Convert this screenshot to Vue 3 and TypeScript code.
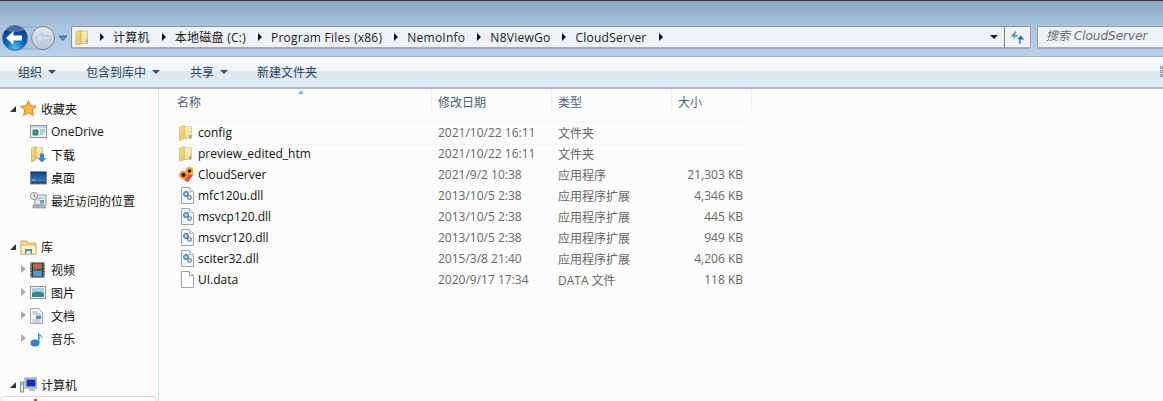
<script setup lang="ts">
type FileRow = { name: string; date: string; type: string; size: string; icon: 'folder' | 'app' | 'dll' | 'file' }
const crumbs = ['计算机', '本地磁盘 (C:)', 'Program Files (x86)', 'NemoInfo', 'N8ViewGo', 'CloudServer']
const tools = [
  { label: '组织', arrow: true },
  { label: '包含到库中', arrow: true },
  { label: '共享', arrow: true },
  { label: '新建文件夹', arrow: false },
]
const files: FileRow[] = [
  { name: 'config', date: '2021/10/22 16:11', type: '文件夹', size: '', icon: 'folder' },
  { name: 'preview_edited_htm', date: '2021/10/22 16:11', type: '文件夹', size: '', icon: 'folder' },
  { name: 'CloudServer', date: '2021/9/2 10:38', type: '应用程序', size: '21,303 KB', icon: 'app' },
  { name: 'mfc120u.dll', date: '2013/10/5 2:38', type: '应用程序扩展', size: '4,346 KB', icon: 'dll' },
  { name: 'msvcp120.dll', date: '2013/10/5 2:38', type: '应用程序扩展', size: '445 KB', icon: 'dll' },
  { name: 'msvcr120.dll', date: '2013/10/5 2:38', type: '应用程序扩展', size: '949 KB', icon: 'dll' },
  { name: 'sciter32.dll', date: '2015/3/8 21:40', type: '应用程序扩展', size: '4,206 KB', icon: 'dll' },
  { name: 'UI.data', date: '2020/9/17 17:34', type: 'DATA 文件', size: '118 KB', icon: 'file' },
]
</script>

<template>
  <div class="win">
    <header class="addr">
      <div class="navbtns">
        <svg width="68" height="30" viewBox="0 0 68 30">
          <defs>
            <radialGradient id="bk" cx="50%" cy="90%" r="75%">
              <stop offset="0" stop-color="#45c0f5" />
              <stop offset="0.5" stop-color="#0f66c0" />
              <stop offset="1" stop-color="#0a3a86" />
            </radialGradient>
            <linearGradient id="fw" x1="0" y1="0" x2="0" y2="1">
              <stop offset="0" stop-color="#e4eaf1" />
              <stop offset="1" stop-color="#b4c6da" />
            </linearGradient>
            <linearGradient id="fl" x1="0" y1="0" x2="1" y2="1">
              <stop offset="0" stop-color="#f7e08c" />
              <stop offset="1" stop-color="#e2bd5c" />
            </linearGradient>
            <linearGradient id="fr" x1="0" y1="0" x2="0" y2="1">
              <stop offset="0" stop-color="#fbf0bd" />
              <stop offset="1" stop-color="#f1d987" />
            </linearGradient>
          </defs>
          <path d="M15 4h28a11 11 0 0 1 0 22H15z" fill="#aec4dc" stroke="#8ca2ba" />
          <circle cx="43" cy="15" r="11.500" fill="url(#fw)" stroke="#7f838a" />
          <path d="M36 15l6-5.500v3.500h8v4h-8v3.500z" fill="#d5dfe9" stroke="#aab7c5" stroke-width=".8" />
          <circle cx="15" cy="15" r="12.500" fill="url(#bk)" stroke="#56708f" />
          <path d="M5.500 7a11 8 0 0 1 19 0c-5 2.500-14 2.500-19 0z" fill="#fff" opacity=".25" />
          <path d="M6 15l7.500-7v4.500h8.500v5h-8.500V22z" fill="#fff" />
          <path d="M59 13h8l-4 4.500z" fill="#4d8fc8" stroke="#234a72" stroke-width=".7" />
        </svg>
      </div>
      <div class="path">
        <svg class="crumb-folder" width="14" height="17" viewBox="0 0 14 17">
          <path d="M1 2.500 6 1v14l-5 1z" fill="url(#fl)" stroke="#c9ad62" stroke-width=".7" />
          <path d="M6 2h6.500v12.500H6z" fill="url(#fr)" stroke="#cdb56e" stroke-width=".7" />
          <path d="M11 10.500h1.500v3H11z" fill="#5aa9dc" />
        </svg>
        <div class="crumbs">
          <template v-for="c in crumbs" :key="c">
            <i class="crumb-arrow"></i>
            <span class="crumb">{{ c }}</span>
          </template>
          <i class="crumb-arrow"></i>
        </div>
        <i class="path-drop"></i>
        <div class="refresh">
          <svg width="15" height="15" viewBox="0 0 15 15">
            <path d="M6.500.5 1 5.500l4 3V6.500h2.800V5H5.500C5.200 3.500 5.800 2 6.500.5z" fill="#4f97d2" />
            <path d="M10.500 14.500V9.500H14L11 5.500 7.300 9h1.900v3.500c0 .8.500 1.500 1.300 2z" fill="#2a64a8" />
          </svg>
        </div>
      </div>
      <div class="search">搜索 CloudServer</div>
    </header>

    <nav class="toolbar">
      <span v-for="t in tools" :key="t.label" class="tool">
        {{ t.label }}<i v-if="t.arrow" class="tool-arrow"></i>
      </span>
      <span class="grip"><b></b><b></b><b></b></span>
    </nav>

    <main class="body">
      <aside class="side">
        <section class="group">
          <div class="nav-row top">
            <i class="open"></i>
            <svg width="17" height="17" viewBox="0 0 17 17"><path d="M8.500.8l2.300 5 5.500.6-4.100 3.700 1.200 5.400-4.900-2.800-4.900 2.800 1.200-5.400L.7 6.400l5.500-.6z" fill="#fbb93c" stroke="#e0782a" /></svg>
            <span>收藏夹</span>
          </div>
          <div class="nav-row sub">
            <svg width="17" height="14" viewBox="0 0 17 14"><rect x=".5" y=".5" width="16" height="12" fill="#eef3f7" stroke="#8e959c" /><rect x="1" y="1" width="15" height="2" fill="#cfd8e0" /><rect x="2.500" y="4.500" width="6" height="6" fill="#3f8a8a" /><path d="M10 5h5M10 7h5M10 9h3" stroke="#8a9aa8" /></svg>
            <span>OneDrive</span>
          </div>
          <div class="nav-row sub">
            <svg width="17" height="17" viewBox="0 0 17 17"><path d="M1.500 2 6 .5v13.500l-4.500 2z" fill="url(#fl)" stroke="#c9ad62" stroke-width=".7" /><path d="M6 1.500h6.500V12H6z" fill="url(#fr)" stroke="#cdb56e" stroke-width=".7" /><path d="M10 7.500h4V12h2.500L12 16.500 7.500 12H10z" fill="#2f8ad8" /></svg>
            <span>下载</span>
          </div>
          <div class="nav-row sub">
            <svg width="17" height="14" viewBox="0 0 17 14"><defs><linearGradient id="dt" x1="0" y1="0" x2="0" y2="1"><stop offset="0" stop-color="#123a82" /><stop offset="1" stop-color="#3f8fd8" /></linearGradient></defs><rect x=".5" y=".5" width="16" height="12.500" fill="url(#dt)" stroke="#7e8a98" /><rect x="1" y="10.500" width="15" height="2" fill="#3a3f48" /><path d="M2 10c.8-1.500 2.500-1.500 3.500 0" stroke="#9fd0f0" fill="none" /></svg>
            <span>桌面</span>
          </div>
          <div class="nav-row sub">
            <svg width="17" height="17" viewBox="0 0 17 17"><rect x="5" y="3" width="11" height="10" fill="#e8edf0" stroke="#8a9298" /><path d="M7 6h7M7 8h3" stroke="#9aa5ad" /><rect x="10" y="8" width="4" height="3.500" fill="#5aa0c8" /><path d="M3 13h11l2 3H3z" fill="#aeb6bc" stroke="#7d868c" stroke-width=".6" /><circle cx="4" cy="4" r="3.500" fill="#fff" stroke="#7d8890" /><path d="M4 2v2l1.500 1" stroke="#555" fill="none" /></svg>
            <span>最近访问的位置</span>
          </div>
        </section>
        <section class="group">
          <div class="nav-row top">
            <i class="open"></i>
            <svg width="17" height="16" viewBox="0 0 17 16"><path d="M1 2h6l1 2h8v11H1z" fill="#f2dc9a" stroke="#c9ad62" /><path d="M1 6h15v9H1z" fill="#fbf0c4" stroke="#d0b873" /><path d="M5 15v-5h7v5z" fill="#4d8fc4" /><rect x="6.500" y="12" width="4" height="3" fill="#fbf0c4" /></svg>
            <span>库</span>
          </div>
          <div class="nav-row sub exp">
            <i class="closed"></i>
            <svg width="15" height="16" viewBox="0 0 15 16"><rect x=".5" y=".5" width="14" height="15" fill="#23343c" /><rect x="3" y="1.500" width="9" height="6" fill="#b06a50" /><rect x="3" y="8.500" width="9" height="6" fill="#4b9ad0" /><path d="M1 2h1M1 5h1M1 8h1M1 11h1M1 14h1M13 2h1M13 5h1M13 8h1M13 11h1M13 14h1" stroke="#d8e4e8" /></svg>
            <span>视频</span>
          </div>
          <div class="nav-row sub exp">
            <i class="closed"></i>
            <svg width="16" height="13" viewBox="0 0 16 13"><rect x=".5" y=".5" width="15" height="12" fill="#f4f6f7" stroke="#8a9298" /><rect x="2" y="2" width="12" height="9" fill="#a8d0e0" /><path d="M2 7c4-2 8-1 12 0v4H2z" fill="#2e8a88" /></svg>
            <span>图片</span>
          </div>
          <div class="nav-row sub exp">
            <i class="closed"></i>
            <svg width="13" height="16" viewBox="0 0 13 16"><path d="M.5.500h8l4 4v11H.5z" fill="#f6f8f9" stroke="#9aa2a8" /><path d="M2.500 4h5M2.500 6h8M2.500 12h8M2.500 14h8" stroke="#9fb0bd" /><rect x="6" y="7.500" width="5" height="3.500" fill="#4c90c0" /></svg>
            <span>文档</span>
          </div>
          <div class="nav-row sub exp">
            <i class="closed"></i>
            <svg width="14" height="17" viewBox="0 0 14 17"><ellipse cx="5" cy="13" rx="4.500" ry="3.500" fill="#2a80cc" /><path d="M8 13V1c0 3 5 3.500 4.500 8-.7-2.500-2.500-3-2.800-3L9.500 13z" fill="#3f9ce0" /></svg>
            <span>音乐</span>
          </div>
        </section>
        <section class="group">
          <div class="nav-row top">
            <i class="open"></i>
            <svg width="17" height="16" viewBox="0 0 17 16"><rect x="5" y="1" width="12" height="10" fill="#d8dde2" stroke="#8a9298" /><rect x="6.500" y="2.500" width="9" height="7" fill="#1230b8" /><path d="M9 12h6v2H9z" fill="#b8c0c6" /><rect x=".5" y="5" width="3" height="10" fill="#dfe3e6" stroke="#8a9298" /><path d="M1 7h2" stroke="#3caa4c" /></svg>
            <span>计算机</span>
          </div>
          <div class="disk-row"><i></i></div>
        </section>
      </aside>

      <section class="list">
        <i class="sort"></i>
        <div class="head cols">
          <span class="c-name">名称</span>
          <span class="c-date">修改日期</span>
          <span class="c-type">类型</span>
          <span class="c-size">大小</span>
        </div>
        <div class="rows">
          <div v-for="f in files" :key="f.name" class="row">
            <span class="name">
              <svg v-if="f.icon === 'folder'" width="13" height="16" viewBox="0 0 13 16"><path d="M.500 2 5.500.500v13L.500 15.500z" fill="url(#fl)" stroke="#d3b964" stroke-width=".7" /><path d="M5.500 1.500h7v12h-7z" fill="url(#fr)" stroke="#d6c07a" stroke-width=".7" /><path d="M10.500 10h1.500v3h-1.500z" fill="#5aa9dc" /></svg>
              <svg v-else-if="f.icon === 'app'" width="15" height="17" viewBox="0 0 15 17"><path d="M2 11 8.500 16.500 14 9 12 5 5 7z" fill="#e8483a" /><circle cx="4.500" cy="9" r="4.300" fill="#f0932e" /><circle cx="4.500" cy="9" r="2" fill="#2a0e06" /><circle cx="10.500" cy="5" r="3.900" fill="#f4a834" /><circle cx="10.500" cy="5" r="1.800" fill="#2a0e06" /></svg>
              <svg v-else-if="f.icon === 'dll'" class="page" width="13" height="17" viewBox="0 0 13 17"><path d="M.5.500h8l4 4v12H.5z" fill="#f4f7f9" stroke="#9ba4ab" /><path d="M8.500.500v4h4" fill="#e6ebef" stroke="#b5bcc2" /><circle cx="5" cy="7" r="2.300" fill="#bcd6ee" stroke="#3f78c0" stroke-width="1.300" /><circle cx="8.500" cy="10.500" r="1.800" fill="#eef2f5" stroke="#74899a" stroke-width="1.300" /></svg>
              <svg v-else class="page" width="13" height="17" viewBox="0 0 13 17"><path d="M.5.500h8l4 4v12H.5z" fill="#fff" stroke="#a0a5a9" /><path d="M8.500.500v4h4" fill="#eef0f2" stroke="#a0a5a9" /></svg>
              <span class="name-text">{{ f.name }}</span>
            </span>
            <span class="meta">{{ f.date }}</span>
            <span class="meta">{{ f.type }}</span>
            <span class="meta right">{{ f.size }}</span>
          </div>
        </div>
      </section>
    </main>
  </div>
</template>

<style>
html, body { margin: 0; padding: 0; background: #fcfcfc; overflow: hidden; }
</style>

<style scoped>
.win {
  width: 1163px;
  height: 401px;
  overflow: hidden;
  display: flex;
  flex-direction: column;
  font-family: "Open Sans", "Noto Sans CJK SC", sans-serif;
  font-size: 12px;
  color: #111;
  background: #fcfcfc;
}
.addr {
  box-sizing: border-box;
  height: 57px;
  flex: none;
  border-top: 1px solid #3b3b3b;
  border-bottom: 1px solid #9fb4cc;
  background: linear-gradient(#8aa5c0, #a9c3df 45%, #b9d1ea);
  display: flex;
  align-items: flex-start;
  padding-top: 22px;
}
.navbtns { width: 71px; height: 30px; flex: none; display: flex; }
.path {
  box-sizing: border-box;
  width: 960px;
  height: 23px;
  margin-top: 3px;
  flex: none;
  display: flex;
  align-items: center;
  background: #eef1f6;
  border: 1px solid #8d9094;
  border-right-color: #a3a6aa;
  border-bottom: 2px solid #a5a9ad;
  border-radius: 2px;
}
.crumb-folder { margin-left: 3px; flex: none; }
.crumbs { display: flex; align-items: center; margin-left: 11px; flex: 1; letter-spacing: .25px; }
.crumb { margin: 0 12px 0 9px; color: #1a1a1a; white-space: nowrap; }
.crumb-arrow { width: 0; height: 0; border-left: 4px solid #111; border-top: 4px solid transparent; border-bottom: 4px solid transparent; flex: none; }
.path-drop { width: 0; height: 0; border-top: 4px solid #101060; border-left: 4px solid transparent; border-right: 4px solid transparent; margin-right: 6px; flex: none; }
.refresh {
  width: 25px;
  height: 21px;
  flex: none;
  border-left: 1px solid #7d8084;
  display: flex;
  align-items: center;
  justify-content: center;
}
.search {
  box-sizing: border-box;
  flex: 1;
  height: 23px;
  margin: 3px 0 0 6px;
  background: #eef1f6;
  border: 1px solid #9aa0a6;
  border-right: 0;
  border-bottom: 2px solid #a5a9ad;
  border-radius: 2px 0 0 2px;
  padding-left: 8px;
  line-height: 19px;
  font-family: "DejaVu Sans", "Noto Sans CJK SC", sans-serif;
  font-style: italic;
  color: #6d6d6d;
  white-space: nowrap;
  overflow: hidden;
}
.toolbar {
  box-sizing: border-box;
  height: 32px;
  flex: none;
  display: flex;
  align-items: center;
  padding-left: 18px;
  gap: 30px;
  border-bottom: 2px solid #a9b9ca;
  background: linear-gradient(#f9fbfe, #eff4fa 46%, #dee8f1 47%, #dfe9f2);
  position: relative;
}
.tool { display: inline-flex; align-items: center; white-space: nowrap; color: #24405f; }
.tool-arrow { width: 0; height: 0; margin-left: 6px; border-top: 4px solid #3a4f66; border-left: 4px solid transparent; border-right: 4px solid transparent; }
.tool:nth-child(4) { margin-left: -1px; }
.grip { position: absolute; right: 0; top: 9px; width: 3px; display: flex; flex-direction: column; gap: 1px; }
.grip b { display: block; width: 3px; height: 3px; background: #fff; outline: 1px solid #8a98a8; outline-offset: -1px; }
.body { flex: 1; display: flex; min-height: 0; }
.side {
  box-sizing: border-box;
  width: 159px;
  flex: none;
  border-right: 1px solid #d5e4f5;
  padding-top: 8px;
  overflow: hidden;
}
.group { margin-bottom: 23px; }
.nav-row { height: 23px; display: flex; align-items: center; color: #111; white-space: nowrap; position: relative; }
.nav-row svg { flex: none; }
.nav-row.top { padding-left: 20px; }
.nav-row.sub { padding-left: 30px; }
.nav-row.sub > span { position: absolute; left: 51px; }
.nav-row.top > span { position: absolute; left: 41px; }
.open { position: absolute; left: 10px; top: 9px; width: 0; height: 0; border-bottom: 6px solid #333; border-left: 6px solid transparent; }
.closed { position: absolute; left: 21px; top: 7px; width: 0; height: 0; border-left: 5px solid #aaa; border-top: 4px solid transparent; border-bottom: 4px solid transparent; }
.disk-row { height: 16px; position: relative; box-sizing: border-box; margin-left: 1px; border: 1px solid #d9d9d9; border-radius: 3px; width: 156px; }
.disk-row i { position: absolute; left: 32px; top: 2px; width: 3px; height: 2px; background: #e0402a; }
.list { flex: 1; position: relative; min-width: 0; }
.sort { position: absolute; left: 139px; top: 1px; width: 0; height: 0; border-bottom: 4px solid #8fb2d2; border-left: 3.5px solid transparent; border-right: 3.5px solid transparent; }
.cols { display: grid; grid-template-columns: 273px 120px 120px 80px; }
.head { height: 28px; color: #4c607a; }
.head span { padding-left: 6px; height: 22px; line-height: 28px; border-right: 1px solid #e8eef5; box-sizing: border-box; }
.head .c-name { padding-left: 18px; }
.rows { padding-top: 5px; }
.row {
  height: 21px;
  margin-left: 16px;
  width: 572px;
  display: grid;
  grid-template-columns: 256px 120px 120px 72px;
  align-items: center;
  box-sizing: border-box;
}
.row:nth-child(1) { box-shadow: 0 -1px 0 #eef7fc; }
.row:nth-child(2) { background: linear-gradient(#eef7fc, #eef7fc) 0 1px / 100% 1px no-repeat; }
.name { display: flex; align-items: center; padding-left: 4px; color: #111; box-sizing: border-box; }
.name svg { flex: none; }
.name svg.page { margin-left: 2px; }
.name-text { position: absolute; left: 39px; }
.meta { color: #666; padding-left: 7px; white-space: nowrap; }
.right { text-align: right; padding-left: 0; }
</style>
